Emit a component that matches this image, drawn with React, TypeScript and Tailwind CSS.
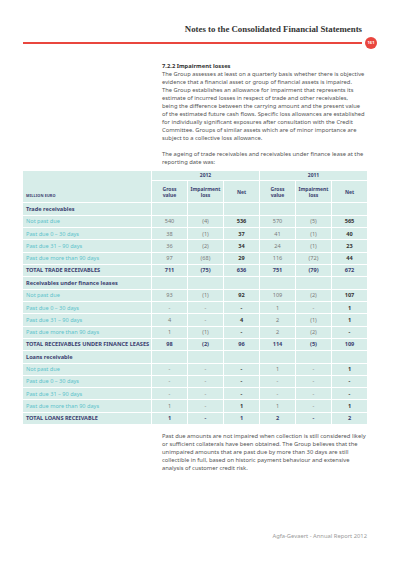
import React from "react";

type Row =
  | { kind: "section"; label: string }
  | { kind: "item"; label: string; v: string[] }
  | { kind: "total"; label: string; v: string[] };

const rows: Row[] = [
  { kind: "section", label: "Trade receivables" },
  { kind: "item", label: "Not past due", v: ["540", "(4)", "536", "570", "(5)", "565"] },
  { kind: "item", label: "Past due 0 – 30 days", v: ["38", "(1)", "37", "41", "(1)", "40"] },
  { kind: "item", label: "Past due 31 – 90 days", v: ["36", "(2)", "34", "24", "(1)", "23"] },
  { kind: "item", label: "Past due more than 90 days", v: ["97", "(68)", "29", "116", "(72)", "44"] },
  { kind: "total", label: "TOTAL TRADE RECEIVABLES", v: ["711", "(75)", "636", "751", "(79)", "672"] },
  { kind: "section", label: "Receivables under finance leases" },
  { kind: "item", label: "Not past due", v: ["93", "(1)", "92", "109", "(2)", "107"] },
  { kind: "item", label: "Past due 0 – 30 days", v: ["-", "-", "-", "1", "-", "1"] },
  { kind: "item", label: "Past due 31 – 90 days", v: ["4", "-", "4", "2", "(1)", "1"] },
  { kind: "item", label: "Past due more than 90 days", v: ["1", "(1)", "-", "2", "(2)", "-"] },
  { kind: "total", label: "TOTAL RECEIVABLES UNDER FINANCE LEASES", v: ["98", "(2)", "96", "114", "(5)", "109"] },
  { kind: "section", label: "Loans receivable" },
  { kind: "item", label: "Not past due", v: ["-", "-", "-", "1", "-", "1"] },
  { kind: "item", label: "Past due 0 – 30 days", v: ["-", "-", "-", "-", "-", "-"] },
  { kind: "item", label: "Past due 31 – 90 days", v: ["-", "-", "-", "-", "-", "-"] },
  { kind: "item", label: "Past due more than 90 days", v: ["1", "-", "1", "1", "-", "1"] },
  { kind: "total", label: "TOTAL LOANS RECEIVABLE", v: ["1", "-", "1", "2", "-", "2"] },
];

const intro = [
  "The Group assesses at least on a quarterly basis whether there is objective",
  "evidence that a financial asset or group of financial assets is impaired.",
  "The Group establishes an allowance for impairment that represents its",
  "estimate of incurred losses in respect of trade and other receivables,",
  "being the difference between the carrying amount and the present value",
  "of the estimated future cash flows. Specific loss allowances are established",
  "for individually significant exposures after consultation with the Credit",
  "Committee. Groups of similar assets which are of minor importance are",
  "subject to a collective loss allowance.",
];

const ageing = [
  "The ageing of trade receivables and receivables under finance lease at the",
  "reporting date was:",
];

const outro = [
  "Past due amounts are not impaired when collection is still considered likely",
  "or sufficient collaterals have been obtained. The Group believes that the",
  "unimpaired amounts that are past due by more than 30 days are still",
  "collectible in full, based on historic payment behaviour and extensive",
  "analysis of customer credit risk.",
];

const sans = "font-['Noto_Sans',sans-serif]";

function Lines({ lines }: { lines: string[] }) {
  return (
    <>
      {lines.map((l, i) => (
        <div key={i} className="whitespace-nowrap">
          {l}
        </div>
      ))}
    </>
  );
}

export default function App() {
  return (
    <div className={`w-[400px] h-[566px] bg-white relative overflow-hidden ${sans}`}>
      {/* Header */}
      <div className="pt-[24px] pl-[23px] pr-[23px]">
        <div className="flex justify-end pr-[15px]">
          <div className="font-['Liberation_Serif',serif] font-bold text-[8.8px] leading-[10px] text-[#333333] whitespace-nowrap">
            Notes to the Consolidated Financial Statements
          </div>
        </div>
        <div className="flex items-center mt-[3px]">
          <div className="flex-1 h-[1.5px] bg-[#e9463e]" />
          <div className="ml-[3px] w-[12px] h-[12px] rounded-full bg-[#e9463e] flex items-center justify-center text-white text-[4px] font-bold leading-none">
            161
          </div>
        </div>
      </div>

      {/* Body text */}
      <div className="pl-[162px] mt-[13px] text-[5.8px] leading-[8px] text-[#555555]">
        <div className="font-bold text-[#333333]">7.2.2 Impairment losses</div>
        <Lines lines={intro} />
        <div className="h-[8px]" />
        <Lines lines={ageing} />
      </div>

      {/* Table */}
      <div className="ml-[23px] mt-[5px] w-[344px]">
        <div className="grid grid-cols-[128px_repeat(6,35px)] gap-px bg-white">
          <div className="row-span-2 bg-[#d7ede9] flex items-end pl-[3px] pb-[3px] text-[3.8px] font-bold text-[#3b4170] tracking-[0.1px]">
            MILLION EURO
          </div>
          <div className="col-span-3 h-[9px] bg-[#d7ede9] flex items-center justify-center text-[5px] font-bold text-[#3b4170]">
            2012
          </div>
          <div className="col-span-3 h-[9px] bg-[#d7ede9] flex items-center justify-center text-[5px] font-bold text-[#3b4170]">
            2011
          </div>
          {["Gross value", "Impairment loss", "Net", "Gross value", "Impairment loss", "Net"].map((h, i) => (
            <div
              key={i}
              className="h-[21px] bg-[#d7ede9] flex items-center justify-center text-center text-[5px] leading-[6px] font-bold text-[#3b4170] px-[2px]"
            >
              {h === "Net" ? (
                "Net"
              ) : (
                <span>
                  {h.split(" ")[0]}
                  <br />
                  {h.split(" ")[1]}
                </span>
              )}
            </div>
          ))}
          {rows.map((r, ri) => {
            if (r.kind === "section") {
              return (
                <React.Fragment key={ri}>
                  <div className="h-[12px] bg-[#d7ede9] flex items-center pl-[3px] text-[5.6px] font-bold text-[#3b4170] whitespace-nowrap">
                    {r.label}
                  </div>
                  {[0, 1, 2, 3, 4, 5].map((c) => (
                    <div key={c} className="h-[12px] bg-[#d7ede9]" />
                  ))}
                </React.Fragment>
              );
            }
            const isTotal = r.kind === "total";
            return (
              <React.Fragment key={ri}>
                <div
                  className={`h-[11.2px] bg-[#d7ede9] flex items-center pl-[3px] text-[5.6px] whitespace-nowrap ${
                    isTotal ? "font-bold text-[#3b4170]" : "text-[#5cc3cb]"
                  }`}
                >
                  {r.label}
                </div>
                {r.v.map((val, c) => {
                  const isNet = c === 2 || c === 5;
                  const cls = isTotal
                    ? "font-bold text-[#3b4170]"
                    : isNet
                    ? "font-bold text-[#333333]"
                    : "text-[#7a7a7a]";
                  return (
                    <div
                      key={c}
                      className={`h-[11.2px] bg-[#d7ede9] flex items-center justify-center text-[5.6px] ${cls}`}
                    >
                      {val}
                    </div>
                  );
                })}
              </React.Fragment>
            );
          })}
        </div>
      </div>

      {/* Outro */}
      <div className="pl-[162px] mt-[8px] text-[5.8px] leading-[8px] text-[#555555]">
        <Lines lines={outro} />
      </div>

      {/* Footer */}
      <div className="absolute left-0 top-[532px] w-[367px] text-right text-[5.8px] leading-[8px] text-[#9a9a9a] whitespace-nowrap">
        Agfa-Gevaert - Annual Report 2012
      </div>
    </div>
  );
}
